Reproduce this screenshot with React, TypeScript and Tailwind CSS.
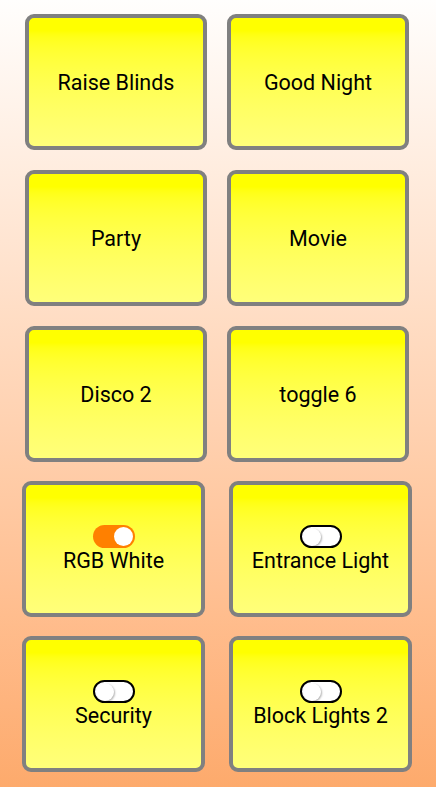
import React from "react";

type Tile = { label: string; toggle?: boolean; on?: boolean };

const scenes: Tile[][] = [
  [{ label: "Raise Blinds" }, { label: "Good Night" }],
  [{ label: "Party" }, { label: "Movie" }],
  [{ label: "Disco 2" }, { label: "toggle 6" }],
];

const switches: Tile[][] = [
  [
    { label: "RGB White", toggle: true, on: true },
    { label: "Entrance Light", toggle: true },
  ],
  [
    { label: "Security", toggle: true },
    { label: "Block Lights 2", toggle: true },
  ],
];

function Switch({ on }: { on?: boolean }) {
  if (on) {
    return (
      <div className="flex h-[23px] w-[42px] items-center justify-end rounded-full bg-[#ff8000] pr-[2px]">
        <div className="h-[19px] w-[19px] rounded-full bg-white" />
      </div>
    );
  }
  return (
    <div className="flex h-[23px] w-[42px] items-center rounded-full border-2 border-black bg-white pl-[1px]">
      <div className="h-[18px] w-[18px] rounded-full bg-white shadow-[1px_1px_2px_rgba(0,0,0,0.3)]" />
    </div>
  );
}

function Card({ tile, width }: { tile: Tile; width: string }) {
  return (
    <div
      className={`${width} flex h-[136px] flex-col items-center justify-center rounded-[9px] border-4 border-[#808080] bg-linear-to-b from-[#ffff00] from-10% to-[#ffff7a]`}
    >
      {tile.toggle && <Switch on={tile.on} />}
      <span className="text-[21.5px] leading-[25px] text-black">{tile.label}</span>
    </div>
  );
}

export default function App() {
  return (
    <div
      className="flex h-[787px] w-[436px] flex-col gap-[20px] overflow-hidden bg-linear-to-b from-[#fffefd] to-[#fdaa6c] pt-[14px]"
      style={{ fontFamily: "Roboto, 'Liberation Sans', sans-serif" }}
    >
      {scenes.map((row, i) => (
        <div key={i} className="flex gap-[20px] pl-[25px]">
          {row.map((t) => (
            <Card key={t.label} tile={t} width="w-[182px]" />
          ))}
        </div>
      ))}
      {switches.map((row, i) => (
        <div key={i} className="-mt-[1px] flex gap-[24px] pl-[22px]">
          {row.map((t) => (
            <Card key={t.label} tile={t} width="w-[183px]" />
          ))}
        </div>
      ))}
    </div>
  );
}
